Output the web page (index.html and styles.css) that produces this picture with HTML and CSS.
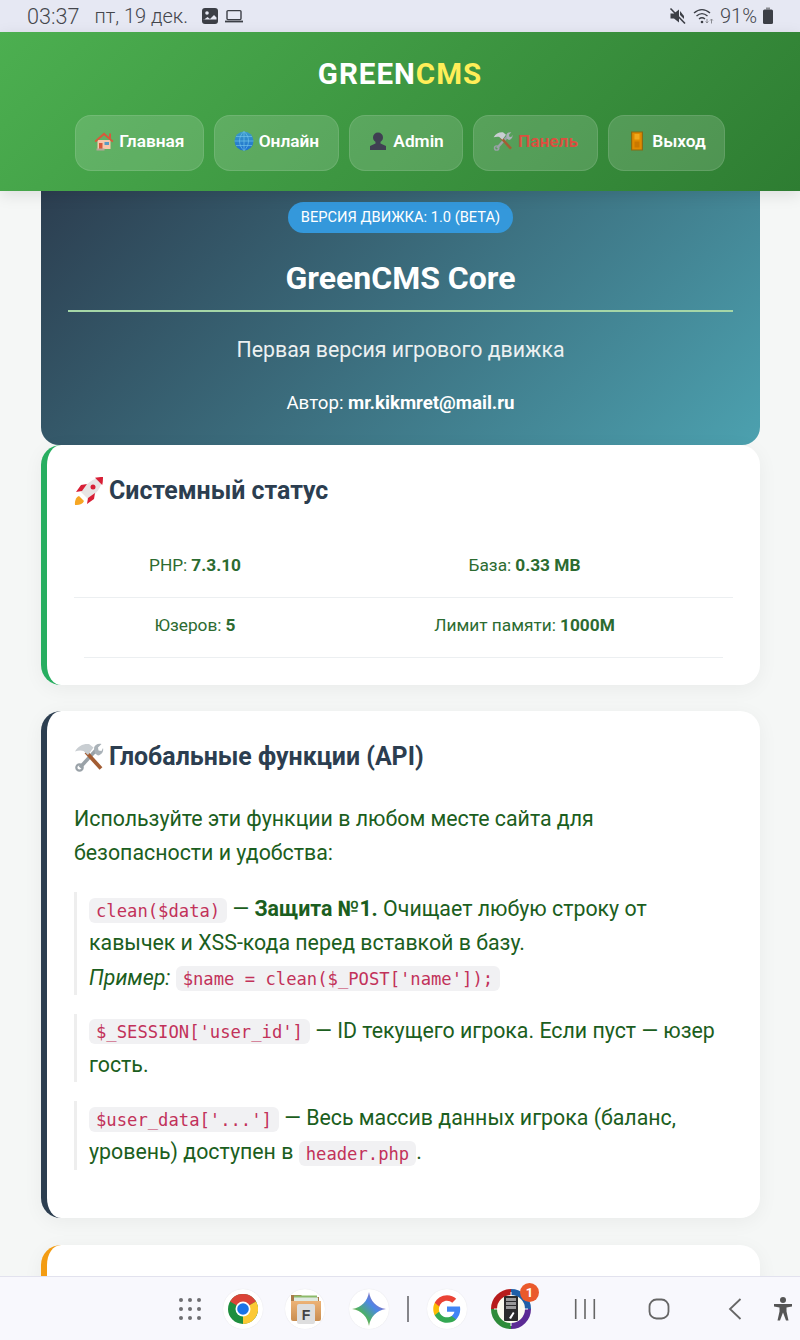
FILE: index.html
```html
<!DOCTYPE html>
<html lang="ru">
<head>
<meta charset="utf-8">
<title>GreenCMS</title>
<link rel="stylesheet" href="styles.css">
</head>
<body>
<div class="statusbar">
  <div class="st-left">
    <span class="st-time">03:37</span>
    <span class="st-date">пт, 19 дек.</span>
    <svg class="st-ic" width="18" height="18" viewBox="0 0 18 18"><rect x="1" y="1" width="16" height="16" rx="3" fill="#3c3f46"/><circle cx="6" cy="6" r="1.8" fill="#e6e8f3"/><path d="M2.5 13l4-3 2.5 2 4-4 2.5 2.5v2h-13z" fill="#e6e8f3"/></svg>
    <svg class="st-ic" width="20" height="16" viewBox="0 0 20 16"><rect x="3" y="2.6" width="14" height="9" rx="1" fill="none" stroke="#3c3f46" stroke-width="1.4"/><path d="M1 13.5h18" stroke="#3c3f46" stroke-width="1.8"/></svg>
  </div>
  <div class="st-right">
    <svg width="18" height="18" viewBox="0 0 18 18"><path d="M1.5 6.5h3.5l5-4v13l-5-4H1.500z" fill="#3c3f46"/><path d="M1.500 1.500l14.500 15" stroke="#3c3f46" stroke-width="1.600"/><path d="M11 4l4 5v3l-4-4z" fill="#3c3f46"/></svg>
    <svg class="st-wifi" width="22" height="18" viewBox="0 0 22 18"><path d="M1 6c5-4.500 11-4.500 16 0M3.500 9c3.500-3 7.500-3 11 0M6 12c2-1.700 4-1.700 6 0" fill="none" stroke="#3c3f46" stroke-width="1.400"/><circle cx="9" cy="15" r="1.300" fill="#3c3f46"/><path d="M14 12v4M12.700 14.500l1.300 1.500 1.300-1.500M18.500 16.500v-4.500M17.200 13.500l1.300-1.500 1.300 1.500" fill="none" stroke="#8a8c92" stroke-width="1"/></svg>
    <span class="st-batt">91%</span>
    <svg width="12" height="18" viewBox="0 0 12 18"><rect x="4" y="0.500" width="4" height="2" fill="#8a8c92"/><rect x="1" y="2.500" width="10" height="14.500" rx="1.500" fill="#3c3f46"/></svg>
  </div>
</div>

<header class="topbar">
  <div class="logo">GREEN<span class="logo-accent">CMS</span></div>
  <nav class="menu">
    <a class="menu-btn">
      <svg class="emo" viewBox="0 0 20 20"><rect x="3.500" y="9" width="13" height="9" fill="#f9c7ab"/><path d="M10 1.500L.5 10l1.300 1.300L10 4.200l8.200 7.100L19.500 10z" fill="#d9583b"/><rect x="15" y="2.500" width="2" height="5" fill="#d9583b"/><rect x="5" y="12" width="3.500" height="6" fill="#d9583b"/><rect x="10.500" y="11" width="4.500" height="3" fill="#5a9bc4"/><rect x="2.500" y="17.500" width="8" height="2" fill="#b8a598"/></svg>
      Главная
    </a>
    <a class="menu-btn">
      <svg class="emo" viewBox="0 0 20 20"><defs><linearGradient id="globe" x1="0" y1="0" x2="0" y2="1"><stop offset="0" stop-color="#3a9bc9"/><stop offset="1" stop-color="#1e6fd0"/></linearGradient></defs><circle cx="10" cy="10" r="9.500" fill="url(#globe)"/><path d="M10 .5v19M.5 10h19M2 5.500h16M2 14.500h16M10 .5c-6 5-6 14 0 19M10 .5c6 5 6 14 0 19" fill="none" stroke="#6fc0ea" stroke-width=".7"/></svg>
      Онлайн
    </a>
    <a class="menu-btn">
      <svg class="emo" viewBox="0 0 20 20"><circle cx="10" cy="6.500" r="5" fill="#3f3f52"/><path d="M7.500 10h5v2.500l5.500 2.500v4H2v-4l5.500-2.500z" fill="#3f3f52"/></svg>
      Admin
    </a>
    <a class="menu-btn">
      <svg class="emo" viewBox="0 0 30 30"><path d="M6 25.500L23 7" stroke="#9aa2a8" stroke-width="3.600"/><path d="M20 6c.5-3 4-5 7.500-4l-3.500 3.500.5 3 3 .5L29 6c1 3.500-1.500 7-5 7.500l-3-2z" fill="#aab2b8"/><circle cx="5.500" cy="25.500" r="3.200" fill="none" stroke="#9aa2a8" stroke-width="2.200"/><path d="M27 26.500L12 10" stroke="#a35d33" stroke-width="3.800"/><path d="M1 9.500C4 4 9 1.500 15 2l4.500 3.500L14 13l-4.500-4C7 8 4 8.500 1 9.500z" fill="#c9ced2"/></svg>
      <span class="menu-danger">Панель</span>
    </a>
    <a class="menu-btn">
      <svg class="emo" viewBox="0 0 20 20"><rect x="4" y="0.500" width="12" height="19" fill="#8a6a12"/><rect x="5.200" y="1.500" width="9.600" height="17" fill="#e08a00"/><rect x="7.500" y="3" width="5" height="5.500" fill="#f2a91c"/><rect x="7.500" y="10.500" width="5" height="6" fill="#c97800"/></svg>
      Выход
    </a>
  </nav>
</header>

<main class="page">
  <section class="hero">
    <span class="pill">ВЕРСИЯ ДВИЖКА: 1.0 (BETA)</span>
    <h1 class="hero-title">GreenCMS Core</h1>
    <p class="hero-sub">Первая версия игрового движка</p>
    <p class="hero-author">Автор: <b>mr.kikmret@mail.ru</b></p>
  </section>

  <section class="card card-green">
    <h2 class="card-title">
      <svg class="emo-lg" viewBox="0 0 30 30"><path d="M1 29c-.5-4 1-8 4-9l5 5c-1 3-5 4.500-9 4z" fill="#f6a623"/><path d="M7 16C11 8 19 2 29 1c-1 10-7 18-15 22z" fill="#e8e4e4"/><path d="M21 1.800c2-.6 5.500-.8 8-.8 0 2.500-.2 6-.8 8z" fill="#d81f36"/><path d="M8 15l-6 1 5-7 6-1zM14 22l-1 6 7-5 1-6z" fill="#d81f36"/><circle cx="19" cy="11" r="2.500" fill="#d81f36"/></svg>
      Системный статус
    </h2>
    <div class="stats">
      <div class="stat stat-a">PHP: <b>7.3.10</b></div>
      <div class="stat stat-b">База: <b>0.33 MB</b></div>
      <div class="stat stat-a stat-inset">Юзеров: <b>5</b></div>
      <div class="stat stat-b stat-inset">Лимит памяти: <b>1000M</b></div>
    </div>
  </section>

  <section class="card card-navy">
    <h2 class="card-title">
      <svg class="emo-lg" viewBox="0 0 30 30"><path d="M6 25.500L23 7" stroke="#9aa2a8" stroke-width="3.600"/><path d="M20 6c.5-3 4-5 7.500-4l-3.500 3.500.5 3 3 .5L29 6c1 3.500-1.500 7-5 7.500l-3-2z" fill="#aab2b8"/><circle cx="5.500" cy="25.500" r="3.200" fill="none" stroke="#9aa2a8" stroke-width="2.200"/><path d="M27 26.500L12 10" stroke="#a35d33" stroke-width="3.800"/><path d="M1 9.500C4 4 9 1.500 15 2l4.500 3.500L14 13l-4.500-4C7 8 4 8.500 1 9.500z" fill="#c9ced2"/></svg>
      Глобальные функции (API)
    </h2>
    <p class="lead">Используйте эти функции в любом месте сайта для безопасности и удобства:</p>
    <div class="api-item"><code>clean($data)</code> — <b>Защита №1.</b> Очищает любую строку от кавычек и XSS-кода перед вставкой в базу.<br><i>Пример:</i> <code>$name = clean($_POST['name']);</code></div>
    <div class="api-item"><code>$_SESSION['user_id']</code> — ID текущего игрока. Если пуст — юзер гость.</div>
    <div class="api-item"><code>$user_data['...']</code> — Весь массив данных игрока (баланс, уровень) доступен в <code>header.php</code>.</div>
  </section>

  <section class="card card-orange"></section>
</main>

<footer class="dock">
  <svg class="dock-grid" width="24" height="24" viewBox="0 0 24 24" fill="#6e6e72"><circle cx="3" cy="3" r="2"/><circle cx="12" cy="3" r="2"/><circle cx="21" cy="3" r="2"/><circle cx="3" cy="12" r="2"/><circle cx="12" cy="12" r="2"/><circle cx="21" cy="12" r="2"/><circle cx="3" cy="21" r="2"/><circle cx="12" cy="21" r="2"/><circle cx="21" cy="21" r="2"/></svg>
  <span class="app app-chrome">
    <svg width="30" height="30" viewBox="0 0 30 30"><circle cx="15" cy="15" r="15" fill="#1e8e3e"/><path d="M15 15L2 7.500A15 15 0 0 1 28 7.500z" fill="#db4437"/><path d="M15 15L28 7.500A15 15 0 0 1 15 30z" fill="#fcc934"/><circle cx="15" cy="15" r="7.500" fill="#fff"/><circle cx="15" cy="15" r="5.800" fill="#1a73e8"/></svg>
  </span>
  <span class="app app-files">
    <svg width="32" height="32" viewBox="0 0 32 32"><defs><linearGradient id="wood" x1="0" y1="0" x2="0" y2="1"><stop offset="0" stop-color="#edb377"/><stop offset="1" stop-color="#c98d50"/></linearGradient></defs><path d="M2 2h10l2 2h16v22H2z" fill="#a87b4a"/><rect x="5" y="2.500" width="23" height="6" fill="#8dbb6a"/><rect x="5" y="4.500" width="24" height="4" fill="#dfe9e2"/><path d="M2 8h30v18a2 2 0 0 1-2 2H4a2 2 0 0 1-2-2z" fill="url(#wood)"/><rect x="8" y="11" width="18" height="20" rx="2" fill="#dedede"/><text x="17" y="26.500" class="files-f">F</text></svg>
  </span>
  <span class="app app-gem">
    <svg width="34" height="34" viewBox="0 0 34 34"><defs><linearGradient id="gem" x1="0" y1="1" x2="1" y2="0"><stop offset="0" stop-color="#f0b429"/><stop offset=".35" stop-color="#4caf6a"/><stop offset=".6" stop-color="#4d86e8"/><stop offset="1" stop-color="#d9577f"/></linearGradient></defs><path d="M17 0c1.500 9 7 15.500 17 17-10 1.500-15.500 8-17 17-1.500-9-7-15.500-17-17 10-1.500 15.500-8 17-17z" fill="url(#gem)"/></svg>
  </span>
  <span class="dock-sep"></span>
  <span class="app app-g">
    <svg width="30" height="30" viewBox="0 0 24 24"><path fill="#4285F4" d="M22.560 12.250c0-.78-.07-1.530-.2-2.250H12v4.260h5.920c-.26 1.370-1.040 2.530-2.210 3.310v2.770h3.570c2.080-1.920 3.280-4.740 3.280-8.090z"/><path fill="#34A853" d="M12 23c2.970 0 5.460-.98 7.280-2.660l-3.570-2.770c-.98.66-2.230 1.060-3.710 1.060-2.860 0-5.290-1.930-6.160-4.530H2.180v2.840C3.990 20.530 7.700 23 12 23z"/><path fill="#FBBC05" d="M5.840 14.090c-.22-.66-.35-1.360-.35-2.090s.13-1.430.35-2.090V7.070H2.180C1.430 8.550 1 10.220 1 12s.43 3.450 1.180 4.930l3.660-2.840z"/><path fill="#EA4335" d="M12 5.380c1.620 0 3.060.56 4.210 1.640l3.150-3.150C17.450 2.090 14.970 1 12 1 7.700 1 3.990 3.470 2.180 7.070l3.660 2.840c.87-2.600 3.300-4.530 6.160-4.530z"/></svg>
  </span>
  <span class="app-task">
    <svg width="40" height="40" viewBox="0 0 40 40"><circle cx="20" cy="20" r="19.500" fill="#fbfbef"/><path d="M3 20A17 17 0 0 1 20 3" fill="none" stroke="#b71c1c" stroke-width="6"/><path d="M20 3A17 17 0 0 1 37 20" fill="none" stroke="#1e5fa8" stroke-width="6"/><path d="M37 20A17 17 0 0 1 20 37" fill="none" stroke="#5b2a94" stroke-width="6"/><path d="M20 37A17 17 0 0 1 3 20" fill="none" stroke="#2e8b3a" stroke-width="6"/><path d="M3 20h6M31 20h6M20 3v6M20 31v6" stroke="#fff" stroke-width="1"/><rect x="13" y="7" width="14" height="25" rx="1" fill="#2b2b2b"/><rect x="15" y="9" width="10" height="3" fill="#999"/><rect x="15" y="13" width="10" height="3" fill="#999"/><rect x="15" y="17" width="10" height="3" fill="#999"/><path d="M18 29l4-6 1.500 1-3.500 6z" fill="#fff"/></svg>
    <span class="badge">1</span>
  </span>
  <svg class="nav-ic nav-recents" width="22" height="22" viewBox="0 0 22 22" fill="none" stroke="#666" stroke-width="1.600"><path d="M1.700 1v20M11 1v20M20.300 1v20"/></svg>
  <svg class="nav-ic nav-home" width="22" height="22" viewBox="0 0 22 22" fill="none" stroke="#666" stroke-width="1.800"><rect x="1.500" y="1.500" width="19" height="19" rx="7"/></svg>
  <svg class="nav-ic nav-back" width="14" height="22" viewBox="0 0 14 22" fill="none" stroke="#666" stroke-width="1.800"><path d="M12.500 1L2 11l10.500 10"/></svg>
  <svg class="nav-ic nav-a11y" width="18" height="24" viewBox="0 0 18 24" fill="#555"><circle cx="9" cy="3" r="3"/><path d="M0 7h18v2.400l-5.500 1v4l2 9h-2.500L9 15.500 6 23.400H3.500l2-9v-4l-5.500-1z"/></svg>
</footer>
</body>
</html>
```
FILE: styles.css
```css
* { box-sizing: border-box; }
html, body { margin: 0; height: 100%; }
body {
  width: 800px;
  height: 1340px;
  display: flex;
  flex-direction: column;
  overflow: hidden;
  font-family: Roboto, "Noto Sans", sans-serif;
  background: #f5f7f6;
  color: #1b5e20;
}

/* status bar */
.statusbar {
  height: 32px;
  flex: none;
  background: #e6e8f3;
  display: flex;
  justify-content: space-between;
  align-items: center;
  padding: 0 26px 0 27px;
  color: #44464c;
  font-size: 20px;
  font-weight: 300;
}
.st-left, .st-right { display: flex; align-items: center; }
.st-time { font-size: 21.6px; }
.st-date { margin-left: 15px; margin-right: 13px; }
.st-ic { margin-right: 5px; }
.st-wifi { margin-left: 6px; }
.st-batt { margin-left: 5px; margin-right: 5px; }

/* top bar */
.topbar {
  flex: none;
  height: 159px;
  background: linear-gradient(135deg, #4caf50, #2e7d32);
  box-shadow: 0 4px 15px rgba(0,0,0,.1);
  position: relative;
  z-index: 2;
  padding-top: 26px;
}
.logo {
  text-align: center;
  font-size: 29.5px;
  line-height: 33px;
  font-weight: 700;
  letter-spacing: 1px;
  color: #fff;
}
.logo-accent { color: #ffee58; }
.menu {
  display: flex;
  justify-content: center;
  gap: 10px;
  margin-top: 24px;
}
.menu-btn {
  height: 56px;
  padding: 0 18.6px 5px;
  display: flex;
  align-items: center;
  gap: 5px;
  font-size: 17.3px;
  font-weight: 600;
  color: #fff;
  background: rgba(255,255,255,.15);
  border: 1px solid rgba(255,255,255,.1);
  border-radius: 16px;
}
.menu-danger { color: #dc4f3f; }
.emo { width: 20px; height: 20px; flex: none; }
.emo-lg { width: 30px; height: 30px; flex: none; }

/* page */
.page {
  flex: 1;
  min-height: 0;
  overflow: hidden;
  padding: 0 40px 0 41px;
}
.hero {
  height: 254px;
  background: linear-gradient(135deg, #2c3e50, #4ca1af);
  border-radius: 0 0 18px 18px;
  padding: 11px 27px 0;
  text-align: center;
  color: #fff;
}
.pill {
  display: inline-block;
  height: 31px;
  line-height: 30px;
  padding: 0 13px;
  border-radius: 16px;
  background: #3498db;
  font-size: 14.66px;
}
.hero-title {
  margin: 0;
  padding: 25px 0 12px;
  height: 79px;
  border-bottom: 2px solid #a5d6a7;
  font-size: 32px;
  line-height: 40px;
  font-weight: 700;
}
.hero-sub {
  margin: 23px 0 0;
  font-size: 21.33px;
  line-height: 30px;
  color: #ecf0f1;
}
.hero-author {
  margin: 26px 0 0;
  font-size: 18.66px;
  line-height: 24px;
}
.hero-author b { font-weight: 700; }

.card {
  background: #fff;
  border-radius: 20px;
  border-left: 6px solid #27ae60;
  box-shadow: 0 4px 20px rgba(0,0,0,.05);
  padding: 28px 27px 27px;
  margin-bottom: 26px;
}
.card-navy { border-left-color: #2c3e50; height: 507px; margin-bottom: 27px; }
.card-orange { border-left-color: #f39c12; height: 200px; }
.card-green { height: 240px; }
.card-title {
  margin: 0;
  display: flex;
  align-items: center;
  gap: 5px;
  font-size: 24.9px;
  line-height: 36px;
  font-weight: 700;
  color: #2c3e50;
}
.stats {
  margin-top: 29px;
  display: grid;
  grid-template-columns: 242px 1fr;
}
.stat {
  height: 60px;
  padding-bottom: 5px;
  display: flex;
  align-items: center;
  justify-content: center;
  gap: 4px;
  font-size: 17.3px;
  color: #2c6b31;
  border-bottom: 1px solid #eceff1;
}
.stat-inset.stat-a { margin-left: 10px; padding-right: 10px; }
.stat-inset.stat-b { margin-right: 10px; padding-left: 10px; }
.lead {
  margin: 27px 0 22px;
  font-size: 21.33px;
  line-height: 34.13px;
}
.api-item {
  border-left: 3px solid #eeeeee;
  padding-left: 12px;
  margin-bottom: 19.2px;
  font-size: 21.33px;
  line-height: 34.13px;
}
code {
  font-family: "DejaVu Sans Mono", "Liberation Mono", monospace;
  font-size: 17.2px;
  line-height: 1;
  color: #c2325a;
  background: #f1f1f3;
  border-radius: 6px;
  padding: 2.5px 7px;
}

/* dock */
.dock {
  flex: none;
  height: 64px;
  background: #f8f8fd;
  border-top: 1px solid #e2e2ee;
  position: relative;
  z-index: 3;
  display: flex;
  align-items: center;
  padding-left: 178px;
}
.dock-grid { margin-right: 21px; }
.app {
  width: 40px;
  height: 40px;
  flex: none;
  border-radius: 50%;
  background: #fff;
  box-shadow: 0 0 1px rgba(0,0,0,.12);
  display: flex;
  align-items: center;
  justify-content: center;
}
.app-chrome { margin-right: 22px; }
.app-files { margin-right: 24px; }
.app-gem { margin-right: 18px; }
.dock-sep { width: 2px; height: 26px; background: #85858a; margin-right: 18px; }
.app-g { margin-right: 24px; }
.app-task { position: relative; width: 40px; height: 40px; margin-right: 43px; display: block; }
.app-task svg { display: block; }
.badge {
  position: absolute;
  top: -6px;
  right: -8px;
  width: 19px;
  height: 19px;
  border-radius: 50%;
  background: #ea5a2c;
  color: #fff;
  font-size: 13px;
  font-weight: 700;
  line-height: 19px;
  text-align: center;
}
.files-f { font-family: "Liberation Sans", sans-serif; font-size: 14px; font-weight: 700; fill: #444; text-anchor: middle; }
.nav-recents { margin-right: 52px; }
.nav-home { margin-right: 58px; }
.nav-back { margin-right: 32px; }
```
